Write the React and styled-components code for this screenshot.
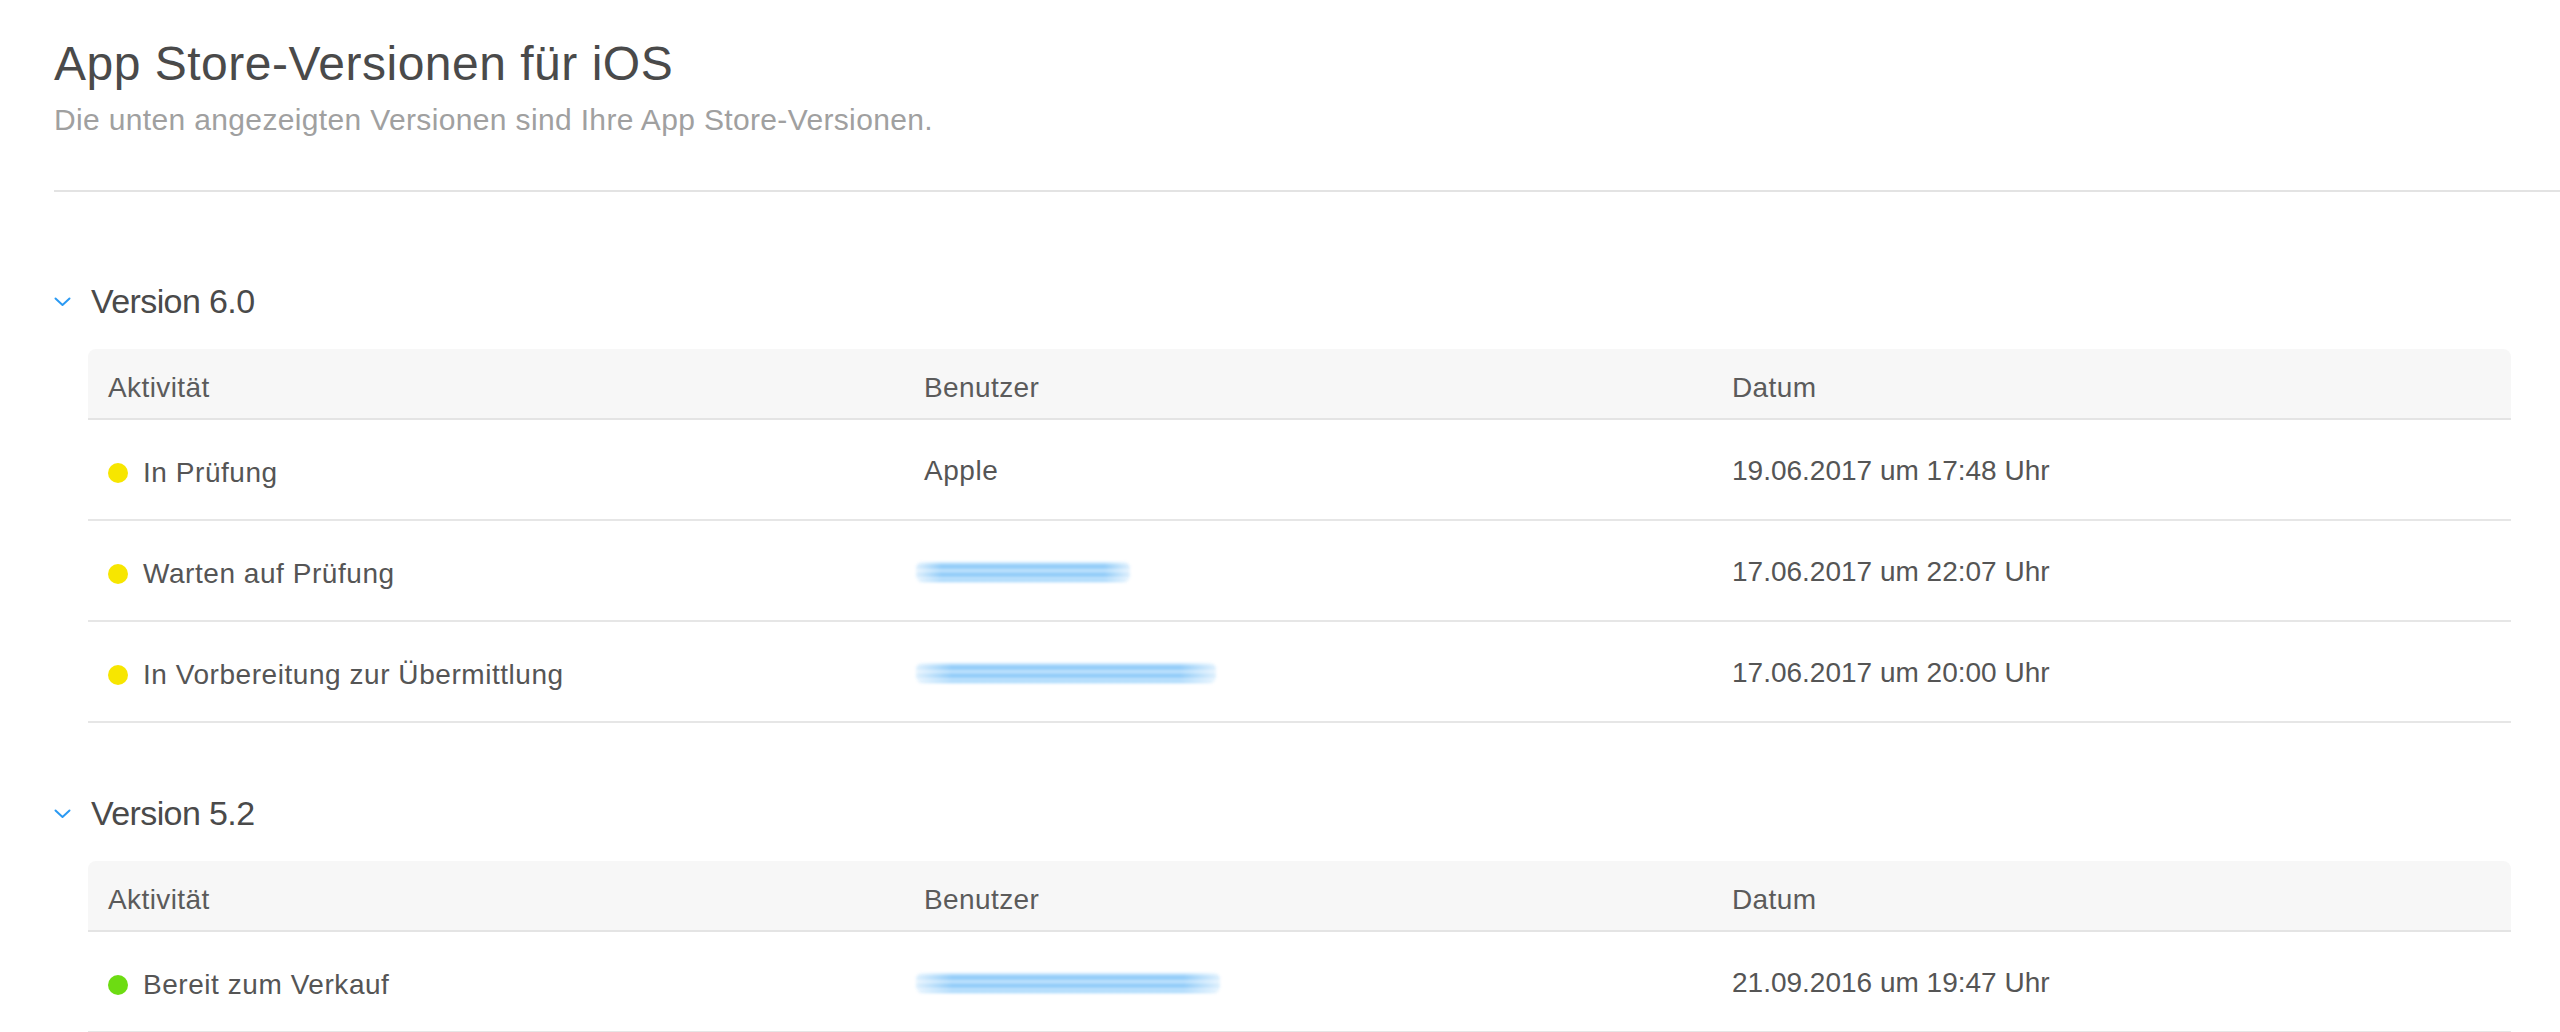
import React from 'react'
import styled, { createGlobalStyle } from 'styled-components'

const GlobalStyle = createGlobalStyle`
  html, body {
    margin: 0;
    padding: 0;
    background: #ffffff;
  }
  body {
    font-family: "Liberation Sans", Arial, sans-serif;
    -webkit-font-smoothing: antialiased;
  }
`

const versions = [
  {
    name: 'Version 6.0',
    rows: [
      { status: 'review', activity: 'In Prüfung', user: 'Apple', date: '19.06.2017 um 17:48 Uhr' },
      { status: 'review', activity: 'Warten auf Prüfung', redacted: 214, date: '17.06.2017 um 22:07 Uhr' },
      { status: 'review', activity: 'In Vorbereitung zur Übermittlung', redacted: 300, date: '17.06.2017 um 20:00 Uhr' },
    ],
  },
  {
    name: 'Version 5.2',
    rows: [
      { status: 'ready', activity: 'Bereit zum Verkauf', redacted: 304, date: '21.09.2016 um 19:47 Uhr' },
    ],
  },
]

const Page = styled.div`
  padding-left: 54px;
  color: #4a4a4a;
`

const Header = styled.header`
  padding-top: 36px;
`

const Title = styled.h1`
  margin: 0;
  font-size: 48px;
  line-height: 56px;
  font-weight: 400;
  color: #4a4a4a;
  letter-spacing: 0.5px;
`

const Subtitle = styled.p`
  margin: 11px 0 0;
  font-size: 30px;
  line-height: 34px;
  color: #a0a0a0;
  letter-spacing: 0.35px;
`

const Divider = styled.hr`
  margin: 53px 0 19px;
  height: 2px;
  border: none;
  background: #e3e3e3;
`

const Section = styled.section`
  padding-top: 70px;
`

const SectionHead = styled.div`
  display: flex;
  align-items: center;
  gap: 20px;
  height: 40px;
`

const SectionTitle = styled.h2`
  margin: 0;
  font-size: 34px;
  line-height: 40px;
  font-weight: 400;
  color: #4a4a4a;
  letter-spacing: -0.6px;
`

const Chevron = styled.svg`
  width: 17px;
  height: 10px;
  margin-top: 2px;
  flex: none;
`

const Table = styled.div`
  margin: 28px 49px 0 34px;
`

const Grid = styled.div`
  display: grid;
  grid-template-columns: 816px 808px 1fr;
  align-items: center;
  border-bottom: 2px solid #e6e6e6;
`

const HeadRow = styled(Grid)`
  padding-top: 8px;
  box-sizing: border-box;
  height: 71px;
  background: #f7f7f7;
  border-radius: 8px 8px 0 0;
  border-bottom-color: #e4e4e4;
`

const Row = styled(Grid)`
  height: 101px;
  box-sizing: border-box;
  padding-top: 2px;
`

const HeadCell = styled.div`
  padding-left: 20px;
  font-size: 28px;
  line-height: 34px;
  color: #5b5b5b;
  letter-spacing: ${p => (p.$tight ? '0' : '0.4px')};
`

const Cell = styled.div`
  padding-left: 20px;
  font-size: 28px;
  line-height: 34px;
  color: #555555;
  display: flex;
  align-items: center;
  letter-spacing: ${p => (p.$tight ? '0' : '0.55px')};
`

const ActivityCell = styled(Cell)`
  gap: 15px;
  padding-top: 5px;
`

const Dot = styled.span`
  width: 20px;
  height: 20px;
  border-radius: 50%;
  flex: none;
  background: ${p => (p.$status === 'ready' ? '#6ddc12' : '#f7e600')};
`

const Redacted = styled.span`
  display: block;
  height: 20px;
  margin-left: -8px;
  border-radius: 6px;
  background:
    linear-gradient(90deg, rgba(255,255,255,0.7) 0%, rgba(255,255,255,0) 12%, rgba(255,255,255,0) 88%, rgba(255,255,255,0.7) 100%),
    repeating-linear-gradient(
      180deg,
      #cfeaff 0px,
      #8ccbfa 3px,
      #6cb9f4 5px,
      #b9e0ff 8px
    );
  filter: blur(1.6px);
  opacity: 0.85;
`

function ChevronIcon() {
  return (
    <Chevron viewBox="0 0 17 10">
      <polyline points="1.5,1.5 8.5,8 15.5,1.5" fill="none" stroke="#2b9af3" strokeWidth="2" strokeLinecap="round" strokeLinejoin="round" />
    </Chevron>
  )
}

function VersionTable({ version }) {
  return (
    <Section>
      <SectionHead>
        <ChevronIcon />
        <SectionTitle>{version.name}</SectionTitle>
      </SectionHead>
      <Table>
        <HeadRow>
          <HeadCell>Aktivität</HeadCell>
          <HeadCell>Benutzer</HeadCell>
          <HeadCell>Datum</HeadCell>
        </HeadRow>
        {version.rows.map((r, i) => (
          <Row key={i}>
            <ActivityCell>
              <Dot $status={r.status} />
              {r.activity}
            </ActivityCell>
            <Cell>
              {r.user ? r.user : <Redacted style={{ width: r.redacted }} />}
            </Cell>
            <Cell $tight>{r.date}</Cell>
          </Row>
        ))}
      </Table>
    </Section>
  )
}

export default function App() {
  return (
    <>
      <GlobalStyle />
      <Page>
        <Header>
          <Title>App Store-Versionen für iOS</Title>
          <Subtitle>Die unten angezeigten Versionen sind Ihre App Store-Versionen.</Subtitle>
        </Header>
        <Divider />
        {versions.map(v => (
          <VersionTable key={v.name} version={v} />
        ))}
      </Page>
    </>
  )
}
